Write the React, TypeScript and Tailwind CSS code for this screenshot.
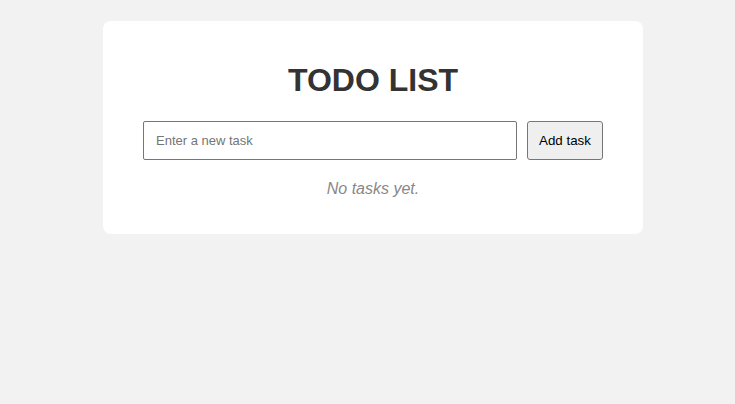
export default function App() {
  return (
    <div className="min-h-screen bg-[#f2f2f2] pt-[21px] font-['Liberation_Sans',Arial,sans-serif]">
      <div className="ml-[103px] w-[540px] rounded-[8px] bg-white px-[40px] pt-[41px] pb-[36px]">
        <h1 className="mb-[22px] text-center text-[32px] leading-[normal] font-bold text-[#333]">
          TODO LIST
        </h1>

        <div className="mb-[20px] flex gap-[10px]">
          <input
            type="text"
            placeholder="Enter a new task"
            className="h-[39px] flex-1 rounded-[2px] border border-[#767676] bg-white px-[12px] text-[13px] text-black placeholder:text-[#757575] outline-none"
          />
          <button className="h-[39px] w-[76px] rounded-[3px] border border-[#767676] bg-[#efefef] text-[13.33px] text-black">
            Add task
          </button>
        </div>

        <p className="text-center text-[16px] leading-[normal] italic text-[#888]">
          No tasks yet.
        </p>
      </div>
    </div>
  );
}
